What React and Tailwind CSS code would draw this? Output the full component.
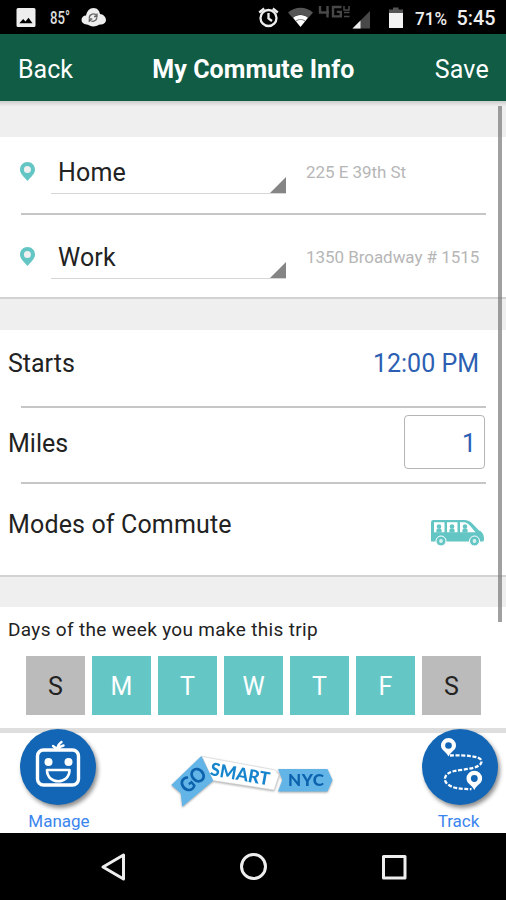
import React from "react";

function StatusBar() {
  return (
    <div className="flex h-[34px] items-center bg-black text-white">
      <svg className="block h-[34px] w-[506px]" viewBox="0 0 506 34">
        <path fill="#eeeeee" fillRule="evenodd" d="M18 8h16a1.500 1.500 0 0 1 1.500 1.500v16a1.500 1.500 0 0 1-1.500 1.500h-16a1.500 1.500 0 0 1-1.500-1.500v-16A1.500 1.500 0 0 1 18 8zM19.300 23.200h13.200l-4-5.400-3 3.600-2.300-2.400z" />
        <text x="50" y="24" fontSize="18" fill="#dddddd" fontFamily="Roboto, sans-serif" fontWeight="500" textLength="20" lengthAdjust="spacingAndGlyphs">85°</text>
        <path fill="#eeeeee" d="M86.500 24.500c-3-.5-5-2-5-4.500s2-4.500 4.500-4.500C87 11 89.500 8 93.500 8s6 3 6.500 6c3 0 6 3 6 6 0 2.500-2 4-4.500 4.500-2 0-3 .5-4.500 1.200-3 1.200-5 1-7.500-.2-1-.5-2-.9-3-1z" />
        <path fill="none" stroke="#666" strokeWidth="1.300" d="M96.800 16a4 4 0 0 0-7.500 2M89.500 19.500a4 4 0 0 0 7.300-2M97 13.500v3h-3M89.300 22v-3h3" />
        <g fill="none" stroke="#eeeeee" strokeWidth="2.300">
          <circle cx="268.500" cy="18" r="8" />
          <path d="M259.200 12.500l5-4M277.800 12.500l-5-4M268.500 13v5.500l3.500 2.500" />
        </g>
        <path fill="#555" d="M288 12.500c7-6.500 18-6.500 25 0l-4.500 5.200c-5-4-11-4-16 0z" />
        <path fill="#fff" d="M293 17.800c4.500-3.700 10.500-3.700 15 0L300.500 27z" />
        <path fill="none" stroke="#777" strokeWidth="1" d="M296 21c3-2 6-2 9 0" />
        <g fill="none" stroke="#484848" strokeWidth="2.400">
          <path d="M320 6v6.500h9M327.500 6v11.500M341.500 7h-8.500v9.400h7.800v-4.500h-4" />
          <path strokeWidth="1.500" d="M344 6v4h5V6M344 12.500h5.500M344 16.500h5.500" />
        </g>
        <path fill="#484848" d="M352.500 28.500L370 11v17.500z" />
        <path fill="#eeeeee" d="M352.500 28.500l8-8v8z" />
        <path fill="#555" d="M389 13V9.500h4V7.500h5.500v2h4.500V13z" />
        <path fill="#f3f3f3" d="M389 13h14v15h-14z" />
        <text x="415" y="24.500" fontSize="18" fill="#eeeeee" fontFamily="Roboto, sans-serif" fontWeight="500" textLength="32" lengthAdjust="spacingAndGlyphs">71%</text>
        <text x="456.500" y="25" fontSize="19.500" fill="#eeeeee" fontFamily="Roboto, sans-serif" fontWeight="500" textLength="39" lengthAdjust="spacingAndGlyphs">5:45</text>
      </svg>
    </div>
  );
}

function PlaceRow({ name, address }) {
  return (
    <div className="flex pl-5">
      <svg className="mt-[25px] h-[19px] w-[15px] shrink-0" viewBox="0 0 15 19">
        <path fill="#63c6c4" d="M7.500 0C3.300 0 0 3.300 0 7.400 0 12 4 14.500 7.500 19 11 14.500 15 12 15 7.400 15 3.300 11.700 0 7.500 0z" />
        <circle cx="7.400" cy="7.500" r="3.500" fill="#f0f0f0" />
      </svg>
      <div className="ml-4 flex h-[57px] w-[235px] items-end justify-between border-b-[1.500px] border-[#d6d6d6] pl-[7px]">
        <span className="pb-[5px] text-[25px] leading-[30px] tracking-[0.15px] text-[#222]">{name}</span>
        <svg className="h-4 w-4" viewBox="0 0 16 16"><path fill="#858585" d="M16 0v16H0z" /></svg>
      </div>
      <span className="ml-5 mt-[25px] text-[17px] leading-[21px] tracking-[-0.05px] whitespace-nowrap text-[#b6b6b6]">{address}</span>
    </div>
  );
}

const days = ["S", "M", "T", "W", "T", "F", "S"];
const divider = "ml-[21px] h-[2px] w-[465px] bg-[#c6c6c6]";
const card = "bg-white border-b-2 border-[#d2d2d2]";

function Rider({ x }) {
  return (
    <g fill="#63c6c4">
      <circle cx={x} cy="7.500" r="2.300" />
      <path d={`M${x - 2.600} 13.500v-2c0-3 5.200-3 5.200 0v2z`} />
    </g>
  );
}

function Van() {
  return (
    <svg className="h-[29px] w-[55px]" viewBox="0 0 55 29">
      <path fill="#63c6c4" d="M3.500 1H34c4 0 6 1.200 8.500 3.800l6.500 6.700c3.500 1.500 5 4 5 8.500 0 2-.5 2.500-2 2.500H1V4c0-2 .5-3 2.500-3z" />
      <path fill="#fff" d="M4 3.200h10.500v10H4zM17 3.200h10.500v10H17zM30 3.200h3.500c3 0 4.500 1.500 7 4l5 6H30z" />
      <Rider x={9} />
      <Rider x={22} />
      <Rider x={35} />
      <g fill="#63c6c4" stroke="#fff" strokeWidth="1"><circle cx="11" cy="22" r="5" /><circle cx="44.500" cy="22" r="5" /></g>
      <g fill="#d9f1f0"><circle cx="11" cy="22" r="1.900" /><circle cx="44.500" cy="22" r="1.900" /></g>
    </svg>
  );
}

const roundButton = "size-[76px] rounded-full bg-[#1266b5] shadow-[2px_3px_4px_rgba(0,0,0,0.45)]";

function Manage() {
  return (
    <svg className={roundButton} viewBox="0 0 76 76">
      <g fill="none" stroke="#fff">
        <rect x="17.500" y="21" width="41" height="35" rx="6" strokeWidth="3.400" />
        <path strokeWidth="2.600" strokeLinejoin="round" d="M27 41h22.500c0 15-22.500 15-22.500 0z" />
        <path strokeWidth="2.400" strokeLinecap="round" d="M37 20l-4-3M37.500 20c0-3 1-5 4-7M38 20c1.500-2 3-3 5.500-3.500" />
      </g>
      <circle cx="28.500" cy="33" r="4" fill="#fff" /><circle cx="48.500" cy="33" r="4" fill="#fff" />
    </svg>
  );
}

function Track() {
  return (
    <svg className={roundButton} viewBox="0 0 76 76">
      <path fill="none" stroke="#fff" strokeWidth="2.300" strokeDasharray="4 1.600" d="M28 26.500c13-.5 31 0 31.500 5.500.5 8-18 8-27 10-10 2-12 9-7 13 5 4.500 13 5 24 5.200" />
      <g fill="#fff">
        <path d="M26.500 27.500C24 22 19 21.500 19 16.500a7.500 7.500 0 0 1 15 0c0 5-5 5.500-7.500 11z" />
        <path d="M52.300 61C49.500 55 44.500 55 44.500 49.500a7.800 7.800 0 0 1 15.600 0c0 5.500-5 5.500-7.800 11.500z" />
      </g>
      <circle cx="26.500" cy="16.500" r="3.300" fill="#1266b5" /><circle cx="52.300" cy="49.500" r="3.400" fill="#1266b5" />
    </svg>
  );
}

function Logo() {
  return (
    <svg className="h-[56px] w-[166px] drop-shadow-[0_1px_1px_rgba(0,0,0,0.35)]" viewBox="170 753 166 56" fontFamily="Lato, sans-serif" fontWeight="900">
      <path fill="#fff" stroke="#d5d5d5" strokeWidth=".6" d="M203 756.500l73 13.500 4 5-5 15-61-9.500z" />
      <path fill="#63b5e8" d="M202.300 756l12 24.700-31 26-1.600-13.400-9.400-8.300z" />
      <path fill="#63b5e8" d="M279 769h49.500l5 11-5 11.500H279l4.300-11.500z" />
      <text transform="translate(188.500 794.500) rotate(-42)" fontSize="21" fill="#0c62ac" textLength="28" lengthAdjust="spacingAndGlyphs">GO</text>
      <text transform="translate(210.500 775) rotate(10)" fontSize="18" fill="#1685cd" textLength="60" lengthAdjust="spacingAndGlyphs">SMART</text>
      <text x="289" y="786.300" fontSize="17" fill="#0c62ac" textLength="36" lengthAdjust="spacing">NYC</text>
    </svg>
  );
}

export default function App() {
  return (
    <div className="flex h-[900px] w-[506px] flex-col overflow-hidden bg-[#efefef] font-[Roboto,sans-serif] text-[#222]">
      <StatusBar />
      <header className="flex h-[67px] shrink-0 items-center justify-between bg-[#115c45] pt-[5px] pr-[17px] pl-[18px] text-[25px] text-white">
        <span>Back</span>
        <span className="mr-px font-bold tracking-[0.08px]">My Commute Info</span>
        <span className="tracking-[0.2px]">Save</span>
      </header>
      <main className="relative h-[627px] shrink-0">
        <div className="h-9 bg-linear-to-b from-[#cccccc] via-[#efefef] via-15% to-[#efefef]" />
        <section className={card + " h-[162px]"}>
          <div className="h-[76px]"><PlaceRow name="Home" address="225 E 39th St" /></div>
          <div className={divider} />
          <div className="pt-[7px]"><PlaceRow name="Work" address="1350 Broadway # 1515" /></div>
        </section>
        <section className={card + " mt-[31px] h-[247px] text-[25px]"}>
          <div className="flex h-[76px] items-center justify-between pr-[27px] pb-[9px] pl-2">
            <span>Starts</span><span className="text-[#2c5fb3]">12:00 PM</span>
          </div>
          <div className={divider} />
          <div className="flex h-[74px] items-center justify-between pr-[21px] pb-[6px] pl-2">
            <span className="pt-1">Miles</span>
            <span className="flex h-[54px] w-[81px] items-center justify-end rounded-[4px] border-[1.500px] border-[#b5b5b5] pt-[3px] pr-2 text-[#2c5fb3]">1</span>
          </div>
          <div className={divider} />
          <div className="flex h-[91px] items-start justify-between pt-[23px] pr-[21px] pl-2">
            <span className="leading-[36px] tracking-[0.15px]">Modes of Commute</span>
            <span className="pt-3"><Van /></span>
          </div>
        </section>
        <section className="mt-[30px] h-[121px] bg-white">
          <p className="h-[49px] pt-[11px] pl-2 text-[19px] leading-[24px] tracking-[0.33px]">Days of the week you make this trip</p>
          <div className="ml-[26px] flex gap-[7px]">
            {days.map((d, i) => (
              <div key={i} className={"flex size-[59px] items-center justify-center pt-[3px] text-[25px] " + (i === 0 || i === 6 ? "bg-[#bbbbbb] text-[#222]" : "bg-[#65c7c5] text-white")}>{d}</div>
            ))}
          </div>
        </section>
        <div className="absolute top-[5px] right-[4px] h-[516px] w-1 bg-[#777777]/70" />
      </main>
      <footer className="flex h-[105px] shrink-0 items-start justify-between border-t-[5px] border-[#dedede] bg-white pr-2 pl-[19px]">
        <div className="-mt-1 flex w-[78px] flex-col items-center text-[17px] text-[#3a85ee]">
          <Manage /><span className="mt-[5px] pl-[2px] leading-[22px] whitespace-nowrap">Manage</span>
        </div>
        <div className="mt-5 mr-[8px] -ml-[8px]"><Logo /></div>
        <div className="-mt-1 flex w-[76px] flex-col items-center text-[17px] text-[#3a85ee]">
          <Track /><span className="mt-[5px] pr-[3px] leading-[22px]">Track</span>
        </div>
      </footer>
      <nav className="flex h-[67px] shrink-0 items-center bg-black">
        <svg className="h-[67px] w-[506px]" viewBox="0 0 506 67" fill="none" stroke="#eeeeee" strokeWidth="3" strokeLinejoin="round">
          <path d="M123.500 22v24L103 34z" />
          <circle cx="253.500" cy="33.500" r="12" />
          <rect x="383.500" y="23.500" width="21.500" height="21.500" />
        </svg>
      </nav>
    </div>
  );
}
